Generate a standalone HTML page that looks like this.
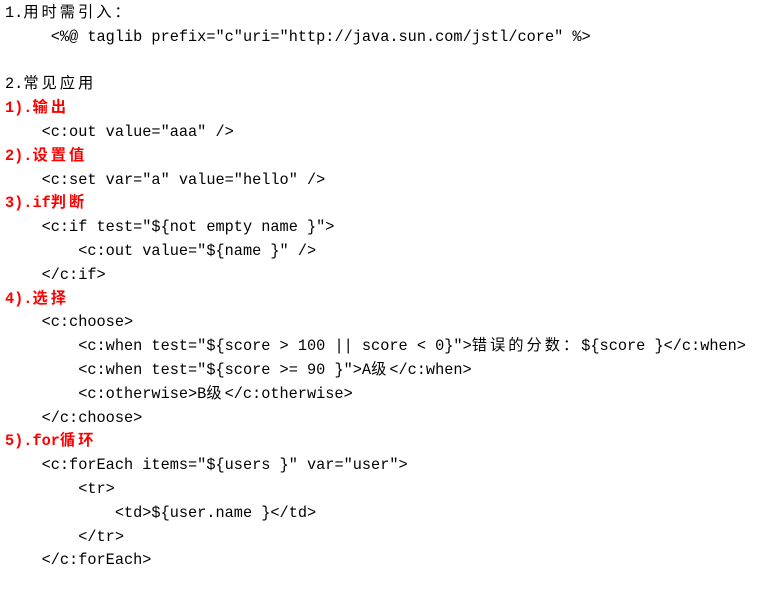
<!DOCTYPE html>
<html><head><meta charset="utf-8"><style>
html,body{margin:0;background:#fff;}
pre{margin:0;padding:2px 0 0 5px;font-family:"Liberation Mono","Noto Sans CJK SC",monospace;font-size:15.25px;line-height:23.8px;color:#000;}
.z{letter-spacing:3px;}
.r{color:#f00;font-weight:bold;}
</style></head><body><pre>1.<span class="z">用时需引入：</span>
     &lt;%@ taglib prefix="c"uri="http://java.sun.com/jstl/core" %&gt;

2.<span class="z">常见应用</span>
<span class="r">1).<span class="z">输出</span></span>
    &lt;c:out value="aaa" /&gt;
<span class="r">2).<span class="z">设置值</span></span>
    &lt;c:set var="a" value="hello" /&gt;
<span class="r">3).if<span class="z">判断</span></span>
    &lt;c:if test="${not empty name }"&gt;
        &lt;c:out value="${name }" /&gt;
    &lt;/c:if&gt;
<span class="r">4).<span class="z">选择</span></span>
    &lt;c:choose&gt;
        &lt;c:when test="${score &gt; 100 || score &lt; 0}"&gt;<span class="z">错误的分数：</span>${score }&lt;/c:when&gt;
        &lt;c:when test="${score &gt;= 90 }"&gt;A<span class="z">级</span>&lt;/c:when&gt;
        &lt;c:otherwise&gt;B<span class="z">级</span>&lt;/c:otherwise&gt;
    &lt;/c:choose&gt;
<span class="r">5).for<span class="z">循环</span></span>
    &lt;c:forEach items="${users }" var="user"&gt;
        &lt;tr&gt;
            &lt;td&gt;${user.name }&lt;/td&gt;
        &lt;/tr&gt;
    &lt;/c:forEach&gt;
</pre></body></html>
